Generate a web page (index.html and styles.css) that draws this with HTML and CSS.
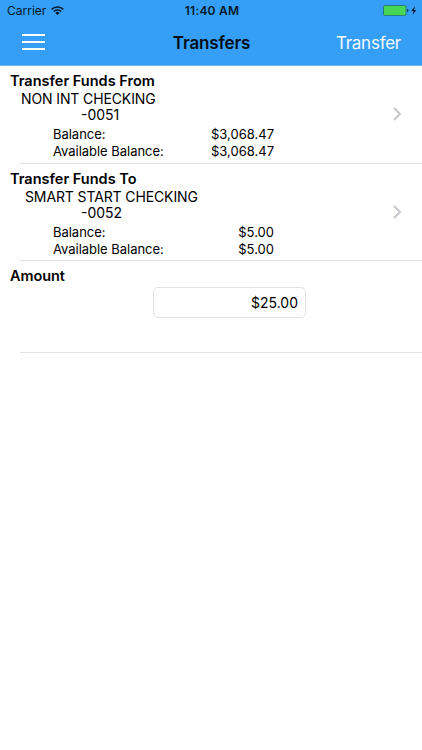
FILE: index.html
```
<!DOCTYPE html>
<html lang="en">

<head>
  <meta charset="UTF-8">
  <meta name="viewport" content="width=device-width, initial-scale=1.0">
  <title>Transfers</title>
  <link rel="stylesheet" href="styles.css">
</head>

<body>
  <header>
    <div class="status">
      <div class="carrier">
        <span>Carrier</span>
        <svg class="wifi" width="13" height="9" viewBox="0 0 13 9" fill="none" stroke="#06192b" stroke-width="1.6">
          <path d="M.7 3.4a8.2 8.2 0 0 1 11.6 0M2.8 5.5a5.2 5.2 0 0 1 7.4 0" />
          <path d="M4.4 6.9a3 3 0 0 1 4.2 0L6.5 9z" fill="#06192b" stroke="none" />
        </svg>
      </div>
      <div class="time">11:40 AM</div>
      <div class="power">
        <svg width="34" height="11" viewBox="0 0 34 11">
          <rect x=".5" y=".5" width="22.5" height="10" rx="1.5" fill="#45d656" stroke="#2a7f78" />
          <path d="M24.3 3.8c1.6.5 1.6 2.9 0 3.4z" fill="#06192b" />
          <path d="M32 1.2 28.2 6h2.3l-1 3.9L33.3 5H31z" fill="#06192b" />
        </svg>
      </div>
    </div>
    <nav>
      <svg class="menu" width="23" height="18" viewBox="0 0 23 18" stroke="#fff" stroke-width="2">
        <path d="M0 2h23M0 9h23M0 16h23" />
      </svg>
      <h1>Transfers</h1>
      <a class="submit">Transfer</a>
    </nav>
  </header>

  <main>
    <section class="account from">
      <h2>Transfer Funds From</h2>
      <div class="name">NON INT CHECKING</div>
      <div class="number">-0051</div>
      <dl>
        <dt>Balance:</dt>
        <dd>$3,068.47</dd>
        <dt>Available Balance:</dt>
        <dd>$3,068.47</dd>
      </dl>
      <svg class="chevron" width="9" height="14" viewBox="0 0 9 14" fill="none" stroke="#c7c7cc" stroke-width="2">
        <path d="M1 1l6 6-6 6" />
      </svg>
    </section>

    <section class="account to">
      <h2>Transfer Funds To</h2>
      <div class="name">SMART START CHECKING</div>
      <div class="number">-0052</div>
      <dl>
        <dt>Balance:</dt>
        <dd>$5.00</dd>
        <dt>Available Balance:</dt>
        <dd>$5.00</dd>
      </dl>
      <svg class="chevron" width="9" height="14" viewBox="0 0 9 14" fill="none" stroke="#c7c7cc" stroke-width="2">
        <path d="M1 1l6 6-6 6" />
      </svg>
    </section>

    <section class="amount">
      <h2>Amount</h2>
      <input type="text" value="$25.00">
    </section>
  </main>
</body>

</html>
```
FILE: styles.css
```
* {
  padding: 0;
  margin: 0;
  box-sizing: border-box;
}

body {
  background-color: #fff;
  color: #000;
  font-family: Inter, 'Liberation Sans', sans-serif;
}

header {
  height: 66px;
  background-color: #359ff8;
  border-bottom: 1px solid #6fb6f5;
}

.status {
  display: grid;
  grid-template-columns: 1fr auto 1fr;
  align-items: center;
  height: 21px;
  padding: 0 5px 0 7px;
  color: #06192b;
  font-size: 12px;
}

.carrier {
  display: flex;
  align-items: center;
  gap: 5px;
}

.time {
  font-weight: 600;
  letter-spacing: .2px;
}

.power {
  display: flex;
  justify-content: flex-end;
}

nav {
  display: grid;
  grid-template-columns: 1fr auto 1fr;
  align-items: center;
  height: 43px;
  padding: 0 21px 0 22px;
}

.menu {
  margin-top: -2px;
}

h1 {
  color: #030d18;
  font-size: 17px;
  font-weight: 600;
  letter-spacing: -.15px;
}

.submit {
  color: #f2faff;
  font-size: 17px;
  letter-spacing: -.25px;
  text-align: right;
}

section {
  position: relative;
}

section::after {
  content: '';
  position: absolute;
  left: 20px;
  right: 0;
  bottom: 0;
  height: 1px;
  background-color: #e2e2e4;
}

h2 {
  padding-left: 10px;
  font-size: 14.5px;
  line-height: 18px;
  font-weight: 600;
}

.account {
  height: 98px;
  padding-top: 6px;
}

.to {
  height: 97px;
}

.name,
.number {
  font-size: 14px;
  line-height: 17px;
}

.name {
  padding-left: 21px;
  letter-spacing: -.12px;
}

.to .name {
  padding-left: 25px;
}

.number {
  padding-left: 81px;
  line-height: 16px;
}

dl {
  display: grid;
  grid-template-columns: 121px 100px;
  padding: 3px 0 0 53px;
  font-size: 13px;
  line-height: 17px;
}

dt {
  letter-spacing: -.03px;
}

dd {
  text-align: right;
}

.chevron {
  position: absolute;
  top: 41px;
  right: 20px;
}

.amount {
  height: 92px;
  padding-top: 6px;
}

.amount h2 {
  letter-spacing: -.1px;
}

input {
  display: block;
  width: 153px;
  height: 31px;
  margin: 2px 0 0 153px;
  padding: 0 7px;
  border: 1px solid #e2e2e4;
  border-radius: 5px;
  color: #000;
  font: 14px Inter, 'Liberation Sans', sans-serif;
  text-align: right;
}
```
